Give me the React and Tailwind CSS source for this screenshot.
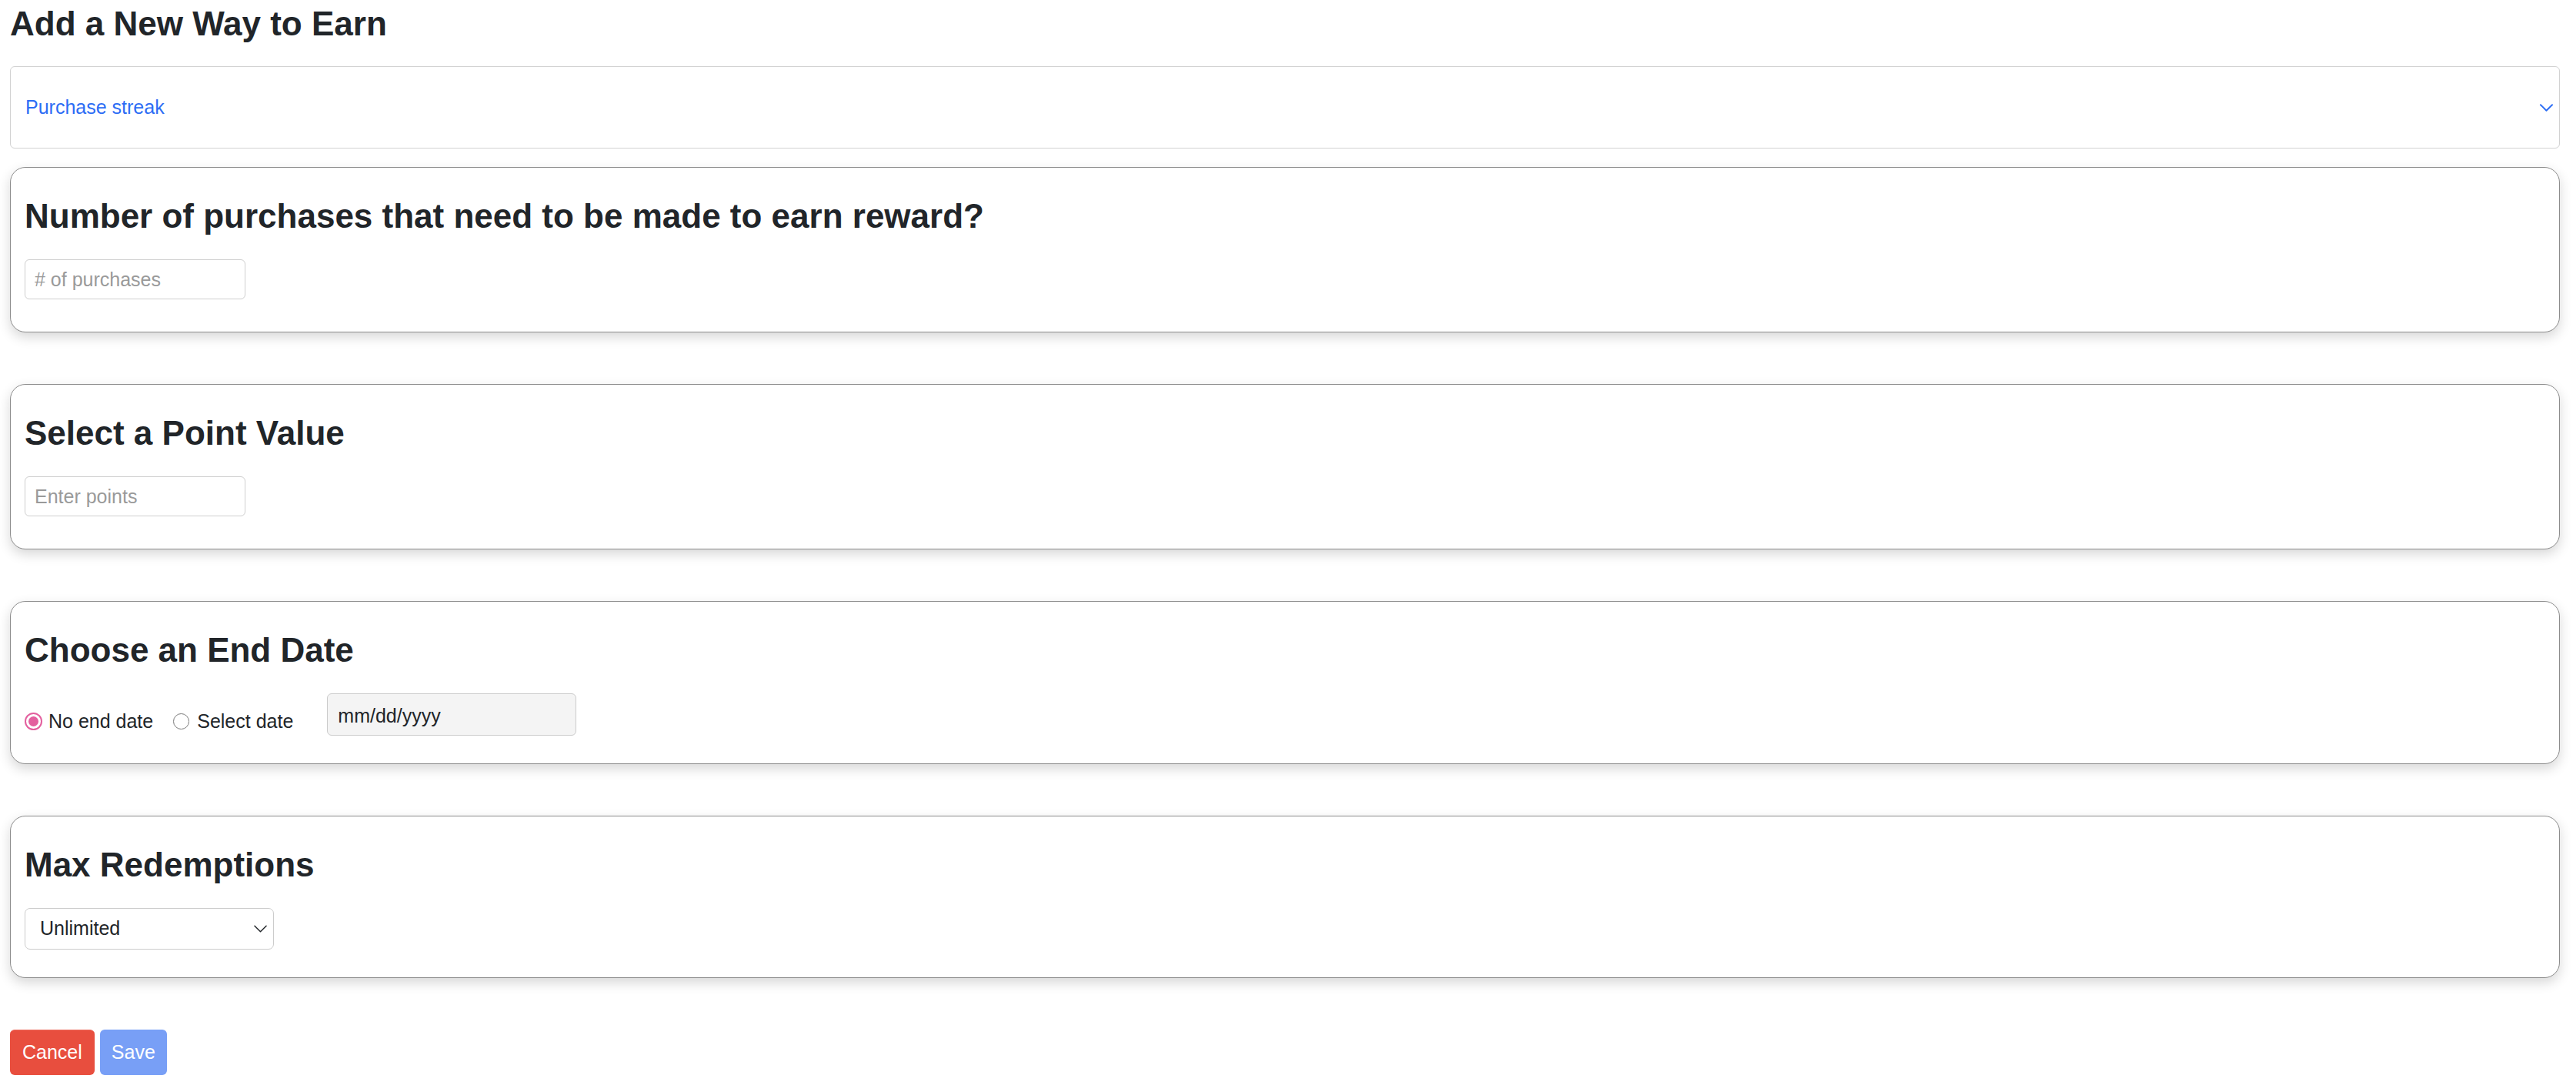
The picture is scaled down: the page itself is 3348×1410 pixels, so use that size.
const font = { fontFamily: '"Liberation Sans", Arial, Helvetica, sans-serif' }

const Card = ({ title, children, first }) => {
    return (
        <div className={(first ? "mt-[24px]" : "mt-[67px]") + " border border-[#8c8c8c] rounded-[20px] bg-white shadow-[0_6px_16px_rgba(0,0,0,0.16)] px-[18px] pt-[36px] pb-[36px]"}>
            <h2 className="text-[44px] leading-[53px] font-bold text-[#212529] mb-[30px]">{title}</h2>
            {children}
        </div>
    )
}

const Chevron = ({ className, color, width }) => (
    <svg className={className} viewBox="0 0 18 10" fill="none">
        <polyline points="1,1 9,9 17,1" stroke={color} strokeWidth={width} strokeLinecap="round" strokeLinejoin="round" />
    </svg>
)

const App = () => {
    return (
        <div className="bg-white min-h-[1410px] pl-[13px] pr-[21px] pt-[4px] text-[#212529]" style={font}>
            <h1 className="text-[44px] leading-[53px] font-bold text-[#212529]">Add a New Way to Earn</h1>

            <div className="mt-[29px] h-[107px] border border-[#d2d2d2] rounded-[6px] flex items-center justify-between pl-[19px] pr-[8px]">
                <span className="text-[25px] text-[#2c6df5]">Purchase streak</span>
                <Chevron className="w-[17px] h-[10px]" color="#2c6df5" width={2} />
            </div>

            <Card first title="Number of purchases that need to be made to earn reward?">
                <input className="block w-[287px] h-[52px] mb-[6px] border border-[#cfcfcf] rounded-[6px] px-[12px] text-[25px] outline-none placeholder:text-[#9a9a9a]" placeholder="# of purchases" />
            </Card>

            <Card title="Select a Point Value">
                <input className="block w-[287px] h-[52px] mb-[6px] border border-[#cfcfcf] rounded-[6px] px-[12px] text-[25px] outline-none placeholder:text-[#9a9a9a]" placeholder="Enter points" />
            </Card>

            <Card title="Choose an End Date">
                <div className="flex items-center">
                    <label className="flex items-center mt-[17px]">
                        <span className="w-[23px] h-[23px] rounded-full border-2 border-[#e35f9e] flex items-center justify-center">
                            <span className="w-[13px] h-[13px] rounded-full bg-[#e35f9e]"></span>
                        </span>
                        <span className="ml-[8px] text-[25px] leading-[30px]">No end date</span>
                    </label>
                    <label className="flex items-center mt-[17px] ml-[26px]">
                        <span className="w-[21px] h-[21px] rounded-full border-[1.5px] border-[#7a7a7a]"></span>
                        <span className="ml-[10px] text-[25px] leading-[30px]">Select date</span>
                    </label>
                    <div className="ml-[44px] w-[324px] h-[55px] bg-[#f4f4f4] border border-[#cccccc] rounded-[6px] pl-[13px] pt-[13px] text-[25px] leading-[30px] text-[#212529]">
                        mm/dd/yyyy
                    </div>
                </div>
            </Card>

            <Card title="Max Redemptions">
                <div className="w-[324px] h-[54px] border border-[#cccccc] rounded-[7px] flex items-center justify-between pl-[19px] pr-[8px] bg-white">
                    <span className="text-[25px]">Unlimited</span>
                    <Chevron className="w-[17px] h-[10px]" color="#212529" width={1.5} />
                </div>
            </Card>

            <div className="mt-[67px] flex gap-[7px]">
                <button className="h-[59px] px-[16px] rounded-[6px] bg-[#e84e3e] border-t border-[#ee6a5c] text-white text-[25px]">Cancel</button>
                <button className="h-[59px] px-[15px] rounded-[6px] bg-[#789ff6] text-white text-[25px]">Save</button>
            </div>
        </div>
    )
}

export default App
